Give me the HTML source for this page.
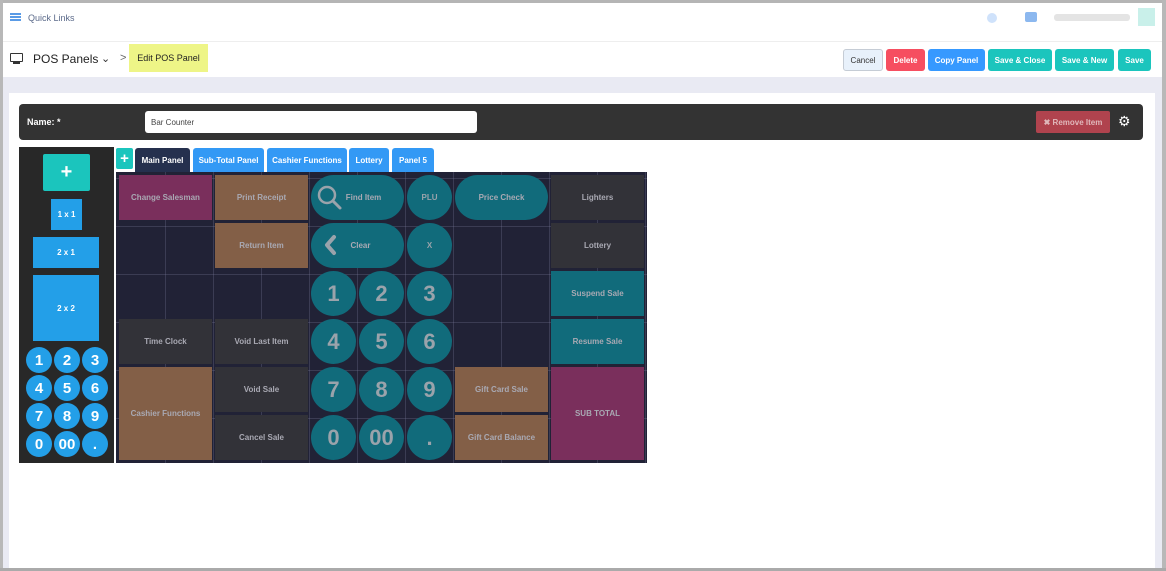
<!DOCTYPE html>
<html><head><meta charset="utf-8"><style>
*{box-sizing:border-box;margin:0;padding:0}
body{width:1166px;height:571px;overflow:hidden;background:#fff;font-family:"Liberation Sans",sans-serif;position:relative}
.a{position:absolute}
.btn{position:absolute;color:#fff;font-size:8px;font-weight:bold;display:flex;align-items:center;justify-content:center;border-radius:3px;height:22px;top:49px}
.c{position:absolute;display:flex;align-items:center;justify-content:center;color:#a9a9b3;font-weight:bold;font-size:8px;text-align:center}
.n{border-radius:50%;background:#116b7b;font-size:22px;color:#9aa3ab}
.lc{position:absolute;width:26px;height:26px;border-radius:50%;background:#239fe8;color:#fff;font-weight:bold;font-size:15px;display:flex;align-items:center;justify-content:center}
.tab{position:absolute;top:148px;height:24px;background:#3399f5;color:#fff;font-size:8px;font-weight:bold;display:flex;align-items:center;justify-content:center;border-radius:3px 3px 0 0}
</style></head><body>
<div class="a" style="left:0;top:0;width:1166px;height:3px;background:#b5b5b5"></div>
<div class="a" style="left:0;top:0;width:3px;height:571px;background:#b8b8b8"></div>
<div class="a" style="left:1162px;top:0;width:4px;height:571px;background:#b8b8b8"></div>
<div class="a" style="left:0;top:568px;width:1166px;height:3px;background:#aaa"></div>
<div class="a" style="left:10px;top:13px;width:11px;height:2px;background:#5a9be6;box-shadow:0 3px 0 #5a9be6,0 6px 0 #5a9be6"></div>
<div class="a" style="left:28px;top:13px;font-size:9px;color:#5b6a8a">Quick Links</div>
<div class="a" style="left:987px;top:13px;width:10px;height:10px;border-radius:50%;background:#cfe2fb"></div>
<div class="a" style="left:1025px;top:12px;width:12px;height:10px;background:#8cb8ef;border-radius:2px"></div>
<div class="a" style="left:1054px;top:14px;width:76px;height:7px;background:#e4e4e4;border-radius:3px"></div>
<div class="a" style="left:1138px;top:8px;width:17px;height:18px;background:#c9f0ea"></div>
<div class="a" style="left:3px;top:41px;width:1159px;height:1px;background:#eee"></div>
<div class="a" style="left:10px;top:53px;width:13px;height:9px;border:1.5px solid #333;border-radius:1px"></div>
<div class="a" style="left:13px;top:62px;width:7px;height:2px;background:#333"></div>
<div class="a" style="left:33px;top:52px;font-size:12px;color:#222">POS Panels</div>
<div class="a" style="left:101px;top:52px;font-size:11px;color:#333">&#8964;</div>
<div class="a" style="left:120px;top:52px;font-size:11px;color:#666">&gt;</div>
<div class="a" style="left:129px;top:44px;width:79px;height:28px;background:#eef587;font-size:9px;color:#222;display:flex;align-items:center;justify-content:center">Edit POS Panel</div>
<div class="btn" style="left:843px;width:40px;background:#e8f1fb;border:1px solid #c5ccd5;color:#333;font-weight:normal">Cancel</div>
<div class="btn" style="left:886px;width:39px;background:#f64e60">Delete</div>
<div class="btn" style="left:928px;width:57px;background:#3699ff">Copy Panel</div>
<div class="btn" style="left:988px;width:64px;background:#1bc5bd">Save &amp; Close</div>
<div class="btn" style="left:1055px;width:59px;background:#1bc5bd">Save &amp; New</div>
<div class="btn" style="left:1118px;width:33px;background:#1bc5bd">Save</div>
<div class="a" style="left:3px;top:77px;width:1159px;height:491px;background:#e9eaf3"></div>
<div class="a" style="left:9px;top:93px;width:1146px;height:475px;background:#fff"></div>
<div class="a" style="left:19px;top:104px;width:1124px;height:36px;background:#333;border-radius:4px"></div>
<div class="a" style="left:27px;top:117px;font-size:9px;color:#fff;font-weight:bold">Name: *</div>
<div class="a" style="left:145px;top:111px;width:332px;height:22px;background:#fff;border-radius:3px;font-size:8px;color:#444;padding:7px 6px">Bar Counter</div>
<div class="a" style="left:1036px;top:111px;width:74px;height:22px;background:#b0434e;border-radius:2px;color:#e0b8bb;font-size:8px;font-weight:bold;display:flex;align-items:center;justify-content:center">✖ Remove Item</div>
<div class="a" style="left:1118px;top:113px;font-size:14px;color:#fff">⚙</div>
<div class="a" style="left:19px;top:147px;width:95px;height:316px;background:#282828"></div>
<div class="a" style="left:43px;top:154px;width:47px;height:37px;background:#1bc5bd;border-radius:2px;color:#fff;font-size:20px;font-weight:bold;display:flex;align-items:center;justify-content:center">+</div>
<div class="a" style="left:51px;top:199px;width:31px;height:31px;background:#239fe8;color:#fff;font-size:8px;font-weight:bold;display:flex;align-items:center;justify-content:center">1 x 1</div>
<div class="a" style="left:33px;top:237px;width:66px;height:31px;background:#239fe8;color:#fff;font-size:8px;font-weight:bold;display:flex;align-items:center;justify-content:center">2 x 1</div>
<div class="a" style="left:33px;top:275px;width:66px;height:66px;background:#239fe8;color:#fff;font-size:8px;font-weight:bold;display:flex;align-items:center;justify-content:center">2 x 2</div>
<div class="lc" style="left:26px;top:347px">1</div><div class="lc" style="left:54px;top:347px">2</div><div class="lc" style="left:82px;top:347px">3</div>
<div class="lc" style="left:26px;top:375px">4</div><div class="lc" style="left:54px;top:375px">5</div><div class="lc" style="left:82px;top:375px">6</div>
<div class="lc" style="left:26px;top:403px">7</div><div class="lc" style="left:54px;top:403px">8</div><div class="lc" style="left:82px;top:403px">9</div>
<div class="lc" style="left:26px;top:431px">0</div><div class="lc" style="left:54px;top:431px">00</div><div class="lc" style="left:82px;top:431px">.</div>
<div class="a" style="left:116px;top:148px;width:17px;height:21px;background:#1bc5bd;border-radius:2px;color:#fff;font-size:15px;font-weight:bold;display:flex;align-items:center;justify-content:center">+</div>
<div class="tab" style="left:135px;width:55px;background:#25304e">Main Panel</div>
<div class="tab" style="left:193px;width:71px">Sub-Total Panel</div>
<div class="tab" style="left:267px;width:80px">Cashier Functions</div>
<div class="tab" style="left:349px;width:40px">Lottery</div>
<div class="tab" style="left:392px;width:42px">Panel 5</div>
<div class="a" style="left:116px;top:172px;width:531px;height:291px;background:#212236;background-image:repeating-linear-gradient(90deg,transparent 0 47px,rgba(120,120,150,.3) 47px 48px),repeating-linear-gradient(0deg,transparent 0 47px,rgba(120,120,150,.3) 47px 48px);background-position:2px 3px"></div>
<div class="c" style="left:119px;top:175px;width:93px;height:45px;background:#7a2f5c">Change Salesman</div>
<div class="c" style="left:215px;top:175px;width:93px;height:45px;background:#835f47">Print Receipt</div>
<div class="c" style="left:215px;top:223px;width:93px;height:45px;background:#835f47">Return Item</div>
<div class="c" style="left:119px;top:319px;width:93px;height:45px;background:#323238">Time Clock</div>
<div class="c" style="left:215px;top:319px;width:93px;height:45px;background:#323238">Void Last Item</div>
<div class="c" style="left:119px;top:367px;width:93px;height:93px;background:#835f47">Cashier Functions</div>
<div class="c" style="left:215px;top:367px;width:93px;height:45px;background:#323238">Void Sale</div>
<div class="c" style="left:215px;top:415px;width:93px;height:45px;background:#323238">Cancel Sale</div>
<div class="c" style="left:311px;top:175px;width:93px;height:45px;background:#116b7b;border-radius:23px;padding-left:12px">
<svg class="a" style="left:6px;top:10px" width="26" height="26" viewBox="0 0 26 26"><circle cx="10" cy="10" r="8" fill="none" stroke="#9aa3ab" stroke-width="2.5"/><path d="M16 16 L23 23" stroke="#9aa3ab" stroke-width="3" stroke-linecap="round"/></svg>Find Item</div>
<div class="c n" style="left:407px;top:175px;width:45px;height:45px;font-size:8px">PLU</div>
<div class="c" style="left:455px;top:175px;width:93px;height:45px;background:#116b7b;border-radius:23px">Price Check</div>
<div class="c" style="left:551px;top:175px;width:93px;height:45px;background:#323238">Lighters</div>
<div class="c" style="left:311px;top:223px;width:93px;height:45px;background:#116b7b;border-radius:23px;padding-left:6px">
<svg class="a" style="left:12px;top:11px" width="14" height="22" viewBox="0 0 14 22"><path d="M11 3 L4 11 L11 19" fill="none" stroke="#9aa3ab" stroke-width="4" stroke-linecap="round" stroke-linejoin="round"/></svg>Clear</div>
<div class="c n" style="left:407px;top:223px;width:45px;height:45px;font-size:8px">X</div>
<div class="c" style="left:551px;top:223px;width:93px;height:45px;background:#323238">Lottery</div>
<div class="c n" style="left:311px;top:271px;width:45px;height:45px">1</div>
<div class="c n" style="left:359px;top:271px;width:45px;height:45px">2</div>
<div class="c n" style="left:407px;top:271px;width:45px;height:45px">3</div>
<div class="c" style="left:551px;top:271px;width:93px;height:45px;background:#116b7b">Suspend Sale</div>
<div class="c n" style="left:311px;top:319px;width:45px;height:45px">4</div>
<div class="c n" style="left:359px;top:319px;width:45px;height:45px">5</div>
<div class="c n" style="left:407px;top:319px;width:45px;height:45px">6</div>
<div class="c" style="left:551px;top:319px;width:93px;height:45px;background:#116b7b">Resume Sale</div>
<div class="c n" style="left:311px;top:367px;width:45px;height:45px">7</div>
<div class="c n" style="left:359px;top:367px;width:45px;height:45px">8</div>
<div class="c n" style="left:407px;top:367px;width:45px;height:45px">9</div>
<div class="c" style="left:455px;top:367px;width:93px;height:45px;background:#835f47">Gift Card Sale</div>
<div class="c" style="left:551px;top:367px;width:93px;height:93px;background:#7a2f5c">SUB TOTAL</div>
<div class="c n" style="left:311px;top:415px;width:45px;height:45px">0</div>
<div class="c n" style="left:359px;top:415px;width:45px;height:45px">00</div>
<div class="c n" style="left:407px;top:415px;width:45px;height:45px">.</div>
<div class="c" style="left:455px;top:415px;width:93px;height:45px;background:#835f47">Gift Card Balance</div>
</body></html>
